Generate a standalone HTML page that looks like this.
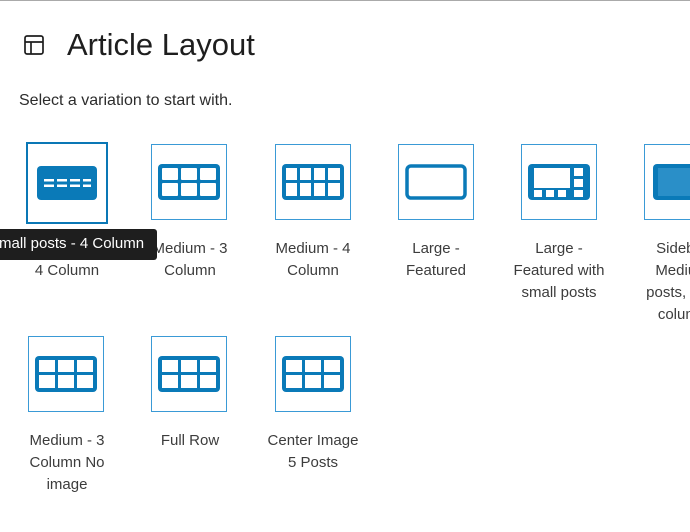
<!DOCTYPE html>
<html><head><meta charset="utf-8"><style>
body{margin:0;width:690px;height:532px;overflow:hidden;background:#fff;font-family:"Liberation Sans",sans-serif;color:#1e1e1e;position:relative;border-top:1px solid #aaa;box-sizing:border-box}
h1{position:absolute;left:67px;top:26px;margin:0;font-weight:400;font-size:31px;color:#1e1e1e}
.sub{position:absolute;left:19px;top:91px;font-size:16px;color:#2c2c2c}
.b{position:absolute;width:76px;height:76px;border:1px solid #3a9ad6;box-sizing:border-box;display:flex;align-items:center;justify-content:center}
.b.sel{border:2px solid #0a77b5;width:82px;height:82px}
.l{position:absolute;width:120px;text-align:center;font-size:15px;line-height:22px;color:#3c3c3c}
.tip{position:absolute;left:0;top:228px;width:157px;overflow:hidden;background:#1e1e1e;color:#fff;font-size:15px;height:31px;line-height:30px;border-radius:0 3px 3px 0;white-space:nowrap}
.tip span{display:inline-block;margin-left:-11px}
</style></head><body>
<svg style="position:absolute;left:23px;top:33px" width="22" height="22" viewBox="0 0 22 22"><rect x="2" y="2" width="18" height="18" rx="2" fill="none" stroke="#1e1e1e" stroke-width="1.7"/><line x1="2" y1="8" x2="20" y2="8" stroke="#1e1e1e" stroke-width="1.7"/><line x1="8" y1="8" x2="8" y2="20" stroke="#1e1e1e" stroke-width="1.7"/></svg>
<h1>Article Layout</h1>
<div class="sub">Select a variation to start with.</div>

<div class="b sel" style="left:26px;top:141px"><svg width="60" height="34"><rect width="60" height="34" rx="4" fill="#0a7ab8"/><g fill="#fff"><rect x="7" y="13" width="10" height="2.5"/><rect x="20" y="13" width="10" height="2.5"/><rect x="33" y="13" width="10" height="2.5"/><rect x="46" y="13" width="8" height="2.5"/><rect x="7" y="18.5" width="10" height="2.5"/><rect x="20" y="18.5" width="10" height="2.5"/><rect x="33" y="18.5" width="10" height="2.5"/><rect x="46" y="18.5" width="8" height="2.5"/></g></svg></div>
<div class="b" style="left:151px;top:143px"><svg width="62" height="36"><rect width="62" height="36" rx="4" fill="#0a7ab8"/><g fill="#fff"><rect x="4" y="4" width="16" height="12" rx="1"/><rect x="23" y="4" width="16" height="12" rx="1"/><rect x="42" y="4" width="16" height="12" rx="1"/><rect x="4" y="19" width="16" height="13" rx="1"/><rect x="23" y="19" width="16" height="13" rx="1"/><rect x="42" y="19" width="16" height="13" rx="1"/></g></svg></div>
<div class="b" style="left:275px;top:143px"><svg width="62" height="36"><rect width="62" height="36" rx="4" fill="#0a7ab8"/><g fill="#fff"><rect x="4" y="4" width="11" height="12"/><rect x="18" y="4" width="11" height="12"/><rect x="32" y="4" width="11" height="12"/><rect x="46" y="4" width="12" height="12"/><rect x="4" y="19" width="11" height="13"/><rect x="18" y="19" width="11" height="13"/><rect x="32" y="19" width="11" height="13"/><rect x="46" y="19" width="12" height="13"/></g></svg></div>
<div class="b" style="left:398px;top:143px"><svg width="62" height="36"><rect x="2" y="2" width="58" height="32" rx="4" fill="none" stroke="#0a7ab8" stroke-width="3.5"/></svg></div>
<div class="b" style="left:521px;top:143px"><svg width="62" height="36"><rect width="62" height="36" rx="4" fill="#0a7ab8"/><g fill="#fff"><rect x="6" y="4" width="36" height="20"/><rect x="46" y="4" width="9" height="8"/><rect x="46" y="15" width="9" height="8"/><rect x="6" y="26" width="8" height="7"/><rect x="18" y="26" width="8" height="7"/><rect x="30" y="26" width="8" height="7"/><rect x="46" y="26" width="9" height="7"/></g></svg></div>
<div class="b" style="left:644px;top:143px;justify-content:flex-start;padding-left:8px"><svg width="62" height="36"><rect width="62" height="36" rx="4" fill="#0a7ab8"/><rect x="5" y="4" width="57" height="28" fill="#2a8fc8"/></svg></div>

<div class="l" style="left:7px;top:259px">4 Column</div>
<div class="l" style="left:130px;top:237px">Medium - 3<br>Column</div>
<div class="l" style="left:253px;top:237px">Medium - 4<br>Column</div>
<div class="l" style="left:376px;top:237px">Large -<br>Featured</div>
<div class="l" style="left:499px;top:237px">Large -<br>Featured with<br>small posts</div>
<div class="l" style="left:622px;top:237px">Sidebar<br>Medium<br>posts, side<br>column</div>
<div class="tip"><span>Small posts - 4 Column</span></div>

<div class="b" style="left:28px;top:335px"><svg width="62" height="36"><rect width="62" height="36" rx="4" fill="#0a7ab8"/><g fill="#fff"><rect x="4" y="4" width="16" height="12"/><rect x="23" y="4" width="16" height="12"/><rect x="42" y="4" width="16" height="12"/><rect x="4" y="19" width="16" height="13"/><rect x="23" y="19" width="16" height="13"/><rect x="42" y="19" width="16" height="13"/></g></svg></div>
<div class="b" style="left:151px;top:335px"><svg width="62" height="36"><rect width="62" height="36" rx="4" fill="#0a7ab8"/><g fill="#fff"><rect x="4" y="4" width="16" height="12"/><rect x="23" y="4" width="16" height="12"/><rect x="42" y="4" width="16" height="12"/><rect x="4" y="19" width="16" height="13"/><rect x="23" y="19" width="16" height="13"/><rect x="42" y="19" width="16" height="13"/></g></svg></div>
<div class="b" style="left:275px;top:335px"><svg width="62" height="36"><rect width="62" height="36" rx="4" fill="#0a7ab8"/><g fill="#fff"><rect x="4" y="4" width="16" height="12"/><rect x="23" y="4" width="16" height="12"/><rect x="42" y="4" width="16" height="12"/><rect x="4" y="19" width="16" height="13"/><rect x="23" y="19" width="16" height="13"/><rect x="42" y="19" width="16" height="13"/></g></svg></div>
<div class="l" style="left:7px;top:429px">Medium - 3<br>Column No<br>image</div>
<div class="l" style="left:130px;top:429px">Full Row</div>
<div class="l" style="left:253px;top:429px">Center Image<br>5 Posts</div>
</body></html>
